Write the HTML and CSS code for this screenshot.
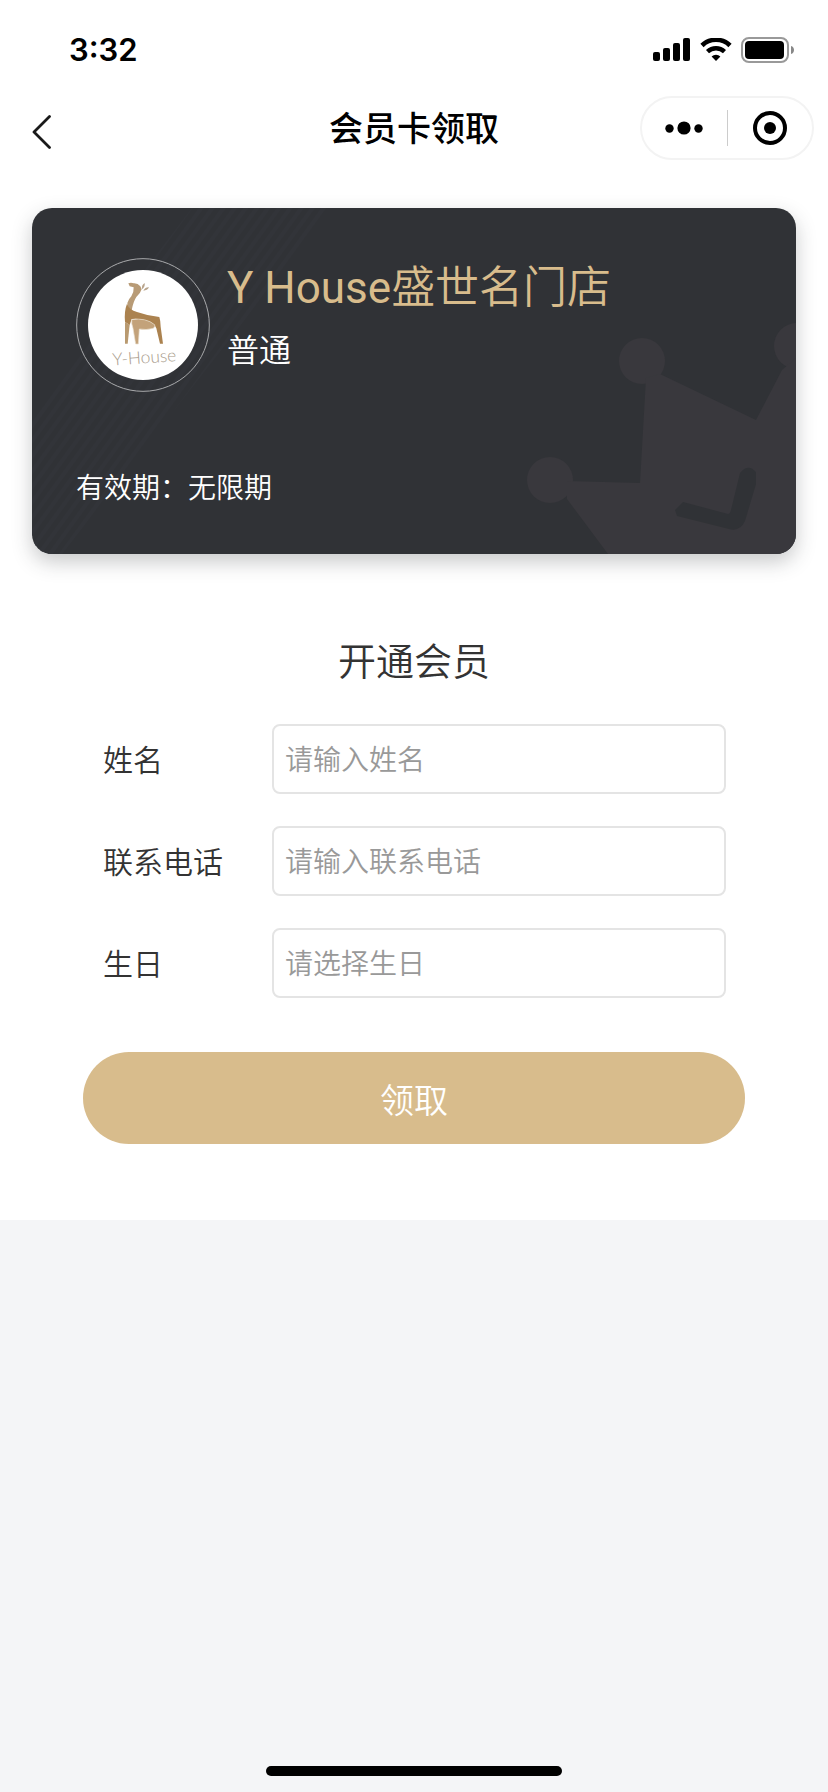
FILE: index.html
```html
<!DOCTYPE html>
<html lang="zh-CN">
<head>
<meta charset="utf-8">
<meta name="viewport" content="width=device-width, initial-scale=1">
<title>会员卡领取</title>
<link rel="stylesheet" href="styles.css">
</head>
<body>
<div class="page">
  <div class="sheet">
    <div class="status-bar">
      <span class="clock">3:32</span>
      <div class="status-icons">
        <svg width="38" height="24" viewBox="0 0 38 24" aria-hidden="true">
          <rect x="0" y="14" width="7" height="9" rx="2"/>
          <rect x="10" y="10" width="7" height="13" rx="2"/>
          <rect x="20" y="5" width="7" height="18" rx="2"/>
          <rect x="30" y="0" width="7" height="23" rx="2"/>
        </svg>
        <svg width="32" height="24" viewBox="0 0 32 24" aria-hidden="true">
          <path d="M2 7.5a20 20 0 0 1 28 0" fill="none" stroke="#000" stroke-width="4.6"/>
          <path d="M7.5 13.6a12.4 12.4 0 0 1 17 0" fill="none" stroke="#000" stroke-width="4.4"/>
          <path d="M16 23l-4.4-4.4a6.4 6.4 0 0 1 8.8 0z"/>
        </svg>
        <svg width="54" height="26" viewBox="0 0 54 26" aria-hidden="true">
          <rect x="1" y="1" width="46" height="24" rx="7" fill="none" stroke="#999" stroke-width="2"/>
          <rect x="4" y="4" width="39" height="18" rx="4"/>
          <path d="M50 9c4 1 4 7 0 8z" fill="#888"/>
        </svg>
      </div>
    </div>

    <header class="nav">
      <button class="back" type="button" aria-label="返回">
        <svg width="20" height="34" viewBox="0 0 20 34"><path d="M17.500 1.500L2 17l15.500 15.500" fill="none" stroke="#1a1a1a" stroke-width="2.800" stroke-linecap="round" stroke-linejoin="round"/></svg>
      </button>
      <h1 class="nav-title">会员卡领取</h1>
      <div class="capsule">
        <button type="button" aria-label="更多">
          <svg width="38" height="14" viewBox="0 0 38 14"><circle cx="4.500" cy="7.500" r="4.200"/><circle cx="19" cy="7" r="6.600"/><circle cx="33.500" cy="7.500" r="4.200"/></svg>
        </button>
        <span class="divider"></span>
        <button type="button" aria-label="关闭">
          <svg width="34" height="34" viewBox="0 0 34 34"><circle cx="17" cy="17" r="15" fill="none" stroke="#000" stroke-width="4"/><circle cx="17" cy="17" r="6"/></svg>
        </button>
      </div>
    </header>

    <main>
      <section class="card">
        <svg class="card-art" viewBox="0 0 764 346" preserveAspectRatio="xMaxYMax slice" aria-hidden="true">
          <defs>
            <pattern id="stripes" width="9" height="9" patternUnits="userSpaceOnUse" patternTransform="rotate(36)">
              <rect width="4" height="9" fill="#323439"/>
            </pattern>
          </defs>
          <path d="M160 0H300L30 346H0V210z" fill="url(#stripes)"/>
          <g fill="#39383d">
            <circle cx="610" cy="153" r="23"/>
            <circle cx="518" cy="272" r="23"/>
            <circle cx="765" cy="138" r="23"/>
            <path d="M614 170L608 275L535 273V291L576 346H764V150L750 162L724 212L628 166z"/>
          </g>
          <path d="M643 302L651 294L696 306Q698 306 699 302L708 265Q716 255 724 264V276L713 313Q708 324 697 321L645 308z" fill="#303236"/>
        </svg>
        <div class="card-head">
          <svg class="logo" viewBox="168 189 402 402" role="img" aria-label="Y-House">
            <circle cx="369" cy="390" r="199" fill="none" stroke="#a9aaac" stroke-width="3"/>
            <circle cx="369" cy="390" r="165" fill="#fff"/>
            <path d="M325 265Q333 261 341 265Q353 264 361 274L365 283Q361 296 349 306Q340 319 335 346Q323 342 322 324Q326 312 334 304Q342 292 341 277L329 274z" fill="#b89b76"/>
            <path d="M366 283Q364 270 374 264Q376 275 366 283zM370 287Q376 276 387 277Q382 287 370 287z" fill="#b8a48c"/>
            <path d="M321 326Q328 345 351 351Q385 363 418 366Q422 378 422 395L429 446H420L409 400Q401 382 381 377Q357 369 335 372L329 390L315 381Q312 349 321 326z" fill="#ab824f"/>
            <path d="M315 381L329 389L323 446H315z" fill="#b99a70"/>
            <path d="M335 374Q377 367 404 389Q407 394 400 400Q378 406 358 402L355 447H347L339 400Q334 386 335 374z" fill="#c3a27a" stroke="#eadfce" stroke-width="2"/>
            <text class="logo-text" x="374" y="505" text-anchor="middle" transform="rotate(-4 374 505)">Y-House</text>
          </svg>
          <div class="card-info">
            <h2 class="store"><span class="brand">Y House</span>盛世名门店</h2>
            <p class="level">普通</p>
          </div>
        </div>
        <p class="validity">有效期：无限期</p>
      </section>

      <form class="join">
        <h2 class="join-title">开通会员</h2>
        <div class="field">
          <label for="name">姓名</label>
          <input id="name" type="text" placeholder="请输入姓名">
        </div>
        <div class="field">
          <label for="phone">联系电话</label>
          <input id="phone" type="tel" placeholder="请输入联系电话">
        </div>
        <div class="field">
          <label for="birthday">生日</label>
          <input id="birthday" type="text" placeholder="请选择生日">
        </div>
        <button class="submit" type="button">领取</button>
      </form>
    </main>
  </div>
  <div class="home-indicator"></div>
</div>
</body>
</html>
```

FILE: styles.css
```css
* {
  box-sizing: border-box;
}

body {
  margin: 0;
  background: #f4f5f7;
  color: #333;
  font-family: "Noto Sans CJK SC", sans-serif;
  font-weight: 350;
}

h1,
h2,
p {
  margin: 0;
  font-weight: inherit;
}

button {
  padding: 0;
  border: 0;
  background: none;
  font-family: inherit;
  font-weight: inherit;
}

svg {
  display: block;
}

.page {
  display: flex;
  flex-direction: column;
  min-height: 100vh;
}

.sheet {
  padding-bottom: 76px;
  background: #fff;
}

.status-bar {
  display: flex;
  align-items: center;
  justify-content: space-between;
  height: 96px;
  padding: 4px 33px 0 69px;
}

.clock {
  color: #000;
  font: 600 31px/40px Inter, sans-serif;
}

.status-icons {
  display: flex;
  align-items: center;
  gap: 9px;
}

.nav {
  display: grid;
  grid-template-columns: 1fr auto 1fr;
  align-items: center;
  height: 64px;
  padding: 0 14px;
}

.back {
  justify-self: start;
  padding: 8px 0 0 18px;
}

.nav-title {
  padding-bottom: 2px;
  color: #000;
  font-size: 34px;
  font-weight: 500;
  line-height: 48px;
}

.capsule {
  display: grid;
  grid-template-columns: 1fr 1px 1fr;
  align-items: center;
  justify-self: end;
  width: 174px;
  height: 64px;
  border: 2px solid #f3f3f3;
  border-radius: 32px;
}

.capsule button {
  display: grid;
  height: 100%;
  place-items: center;
}

.divider {
  height: 36px;
  background: #ccc;
}

.card {
  position: relative;
  display: flex;
  flex-direction: column;
  justify-content: space-between;
  min-height: 346px;
  margin: 48px 32px 0;
  padding: 50px 44px 46px;
  overflow: hidden;
  border-radius: 20px;
  background: #303236;
  box-shadow: 0 8px 20px rgba(48, 50, 54, 0.26);
  color: #fff;
}

.card-art {
  position: absolute;
  inset: 0;
  width: 100%;
  height: 100%;
}

.card-head {
  position: relative;
  display: flex;
  gap: 17px;
}

.logo {
  flex: none;
  width: 134px;
  height: 134px;
}

.logo-text {
  fill: #a99c8c;
  font: 300 52px Lato, sans-serif;
}

.store {
  color: #d8bc8c;
  font-family: Roboto, "Noto Sans CJK SC", sans-serif;
  font-size: 44px;
  line-height: 60px;
}

.brand {
  font-weight: 400;
}

.level {
  margin-top: 8px;
  font-size: 32px;
  line-height: 44px;
}

.validity {
  position: relative;
  font-size: 28px;
  line-height: 44px;
}

.join {
  padding: 78px 83px 0;
}

.join-title {
  margin-bottom: 38px;
  font-size: 38px;
  line-height: 54px;
  text-align: center;
}

.field {
  display: grid;
  grid-template-columns: 169px 1fr;
  align-items: center;
  margin-bottom: 32px;
  padding: 0 19px 0 20px;
}

.field label {
  padding-bottom: 2px;
  font-size: 30px;
  line-height: 44px;
}

.field input {
  width: 100%;
  height: 70px;
  padding: 0 11px 2px;
  border: 2px solid #e4e4e4;
  border-radius: 8px;
  background: #fff;
  color: #333;
  font-family: inherit;
  font-size: 28px;
  font-weight: inherit;
}

.field input::placeholder {
  color: #999;
  opacity: 1;
}

.submit {
  display: block;
  width: 100%;
  height: 92px;
  margin-top: 54px;
  border-radius: 46px;
  background: #d8bc8c;
  color: #fff;
  font-size: 34px;
}

.home-indicator {
  width: 296px;
  height: 10px;
  margin: auto auto 16px;
  border-radius: 5px;
  background: #000;
}
```
